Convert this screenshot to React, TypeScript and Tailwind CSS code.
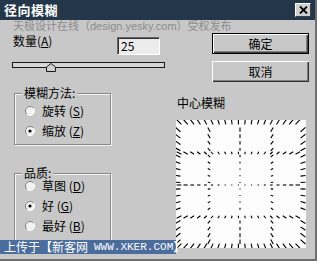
import React from "react";

const FONT = '"Noto Sans CJK SC", "Noto Sans", sans-serif';

function Radio({ checked }: { checked?: boolean }) {
  return (
    <svg width="10" height="10" viewBox="0 0 10 10" className="shrink-0">
      <circle cx="5" cy="5" r="4.5" fill="#f2f2f2" stroke="#ffffff" strokeWidth="1" />
      <path d="M1.8 8.2 A4.5 4.5 0 0 1 8.2 1.8" fill="none" stroke="#7a7a7a" strokeWidth="1" />
      {checked && <circle cx="5" cy="5" r="1.6" fill="#000" />}
    </svg>
  );
}

function RadioRow({ checked, label, k }: { checked?: boolean; label: string; k: string }) {
  return (
    <div className="flex h-[20px] items-center gap-[7px]">
      <Radio checked={checked} />
      <span className="text-[12px] leading-[14px] text-black">
        {label} (<span className="underline">{k}</span>)
      </span>
    </div>
  );
}

function Preview() {
  const W = 130;
  const H = 128;
  const cx = 64;
  const cy = 65;
  const xs = [2, 33, 64, 96, 127];
  const ys = [2, 33, 65, 97, 126];
  const dashes: { x1: number; y1: number; x2: number; y2: number }[] = [];
  const add = (px: number, py: number) => {
    const dx = px - cx;
    const dy = py - cy;
    const r = Math.sqrt(dx * dx + dy * dy);
    const L = Math.max(1, Math.min(7, 0.078 * r));
    const ux = r === 0 ? 1 : dx / r;
    const uy = r === 0 ? 0 : dy / r;
    dashes.push({
      x1: px - (ux * L) / 2,
      y1: py - (uy * L) / 2,
      x2: px + (ux * L) / 2,
      y2: py + (uy * L) / 2,
    });
  };
  for (const y of ys) {
    for (let x = 3; x <= 127; x += 6.6) add(x, y);
  }
  for (const x of xs) {
    for (let y = 3; y <= 126; y += 6.6) {
      if (ys.some((yy) => Math.abs(yy - y) < 2.5)) continue;
      add(x, y);
    }
  }
  return (
    <svg width={W} height={H} viewBox={`0 0 ${W} ${H}`} className="block">
      <rect x="0" y="0" width={W} height={H} fill="#fcfcfc" />
      {dashes.map((d, i) => (
        <line key={i} x1={d.x1} y1={d.y1} x2={d.x2} y2={d.y2} stroke="#000" strokeWidth="1.1" strokeLinecap="butt" />
      ))}
    </svg>
  );
}

function Group({ title, children, className }: { title: string; children: React.ReactNode; className: string }) {
  return (
    <div
      className={`relative ml-[2px] w-[97px] border border-[#8a8a8a] shadow-[inset_1px_1px_0_#f4f4f4,1px_1px_0_#f4f4f4] ${className}`}
    >
      <span className="absolute left-[7px] top-[-8px] bg-[#c8c8c8] px-[2px] text-[12px] leading-[14px] text-black">
        {title}
      </span>
      {children}
    </div>
  );
}

export default function App() {
  return (
    <div
      className="relative flex h-[261px] w-[317px] flex-col overflow-hidden border-b-[2px] border-r-[2px] border-[#6e6e6e] bg-[#c8c8c8]"
      style={{ fontFamily: FONT }}
    >
      {/* title bar */}
      <div className="flex h-[20px] shrink-0 items-center justify-between bg-[#243649] pl-[4px] pr-[4px]">
        <span className="text-[13px] font-bold leading-[16px] tracking-[0.5px] text-white">径向模糊</span>
        <div className="flex h-[14px] w-[16px] items-center justify-center border border-b-[#404040] border-l-[#ffffff] border-r-[#404040] border-t-[#ffffff] bg-[#d0d0d0]">
          <svg width="9" height="8" viewBox="0 0 9 8">
            <path d="M1 0.5 L8 7.5 M8 0.5 L1 7.5" stroke="#000" strokeWidth="1.8" />
          </svg>
        </div>
      </div>

      {/* body */}
      <div className="flex flex-1 pl-[12px]">
        {/* left column */}
        <div className="flex w-[153px] flex-col">
          <div className="mt-[13px] flex h-[22px]">
            <span className="mt-[1px] w-[105px] pl-[1px] text-[12px] leading-[14px] text-black">
              数量(<span className="underline">A</span>)
            </span>
            <div className="mt-[4px] flex h-[18px] w-[43px] items-center border border-b-[#ffffff] border-l-[#6a6a6a] border-r-[#ffffff] border-t-[#6a6a6a] bg-[#ececec] pl-[3px] shadow-[inset_1px_1px_0_#303030]">
              <span className="text-[12px] leading-[14px] text-black">25</span>
            </div>
          </div>
          <div className="relative mt-[7px] h-[6px] w-[153px] border border-[#1a1a1a] bg-[#d6d6d6]">
            <svg width="10" height="9" viewBox="0 0 10 9" className="absolute left-[33px] top-[0px]">
              <path d="M0.5 8.5 L0.5 4 L5 0.5 L9.5 4 L9.5 8.5 Z" fill="#cfcfcf" stroke="#1a1a1a" strokeWidth="1" />
            </svg>
          </div>

          <Group title="模糊方法:" className="mt-[25px] h-[52px] pl-[10px] pt-[7px]">
            <RadioRow label="旋转" k="S" />
            <RadioRow label="缩放" k="Z" checked />
          </Group>

          <Group title="品质:" className="mt-[28px] h-[78px] pl-[10px] pt-[2px]">
            <RadioRow label="草图" k="D" />
            <RadioRow label="好" k="G" checked />
            <RadioRow label="最好" k="B" />
          </Group>
        </div>

        {/* right column */}
        <div className="ml-[11px] flex w-[130px] flex-col">
          <div className="ml-[36px] mt-[13px] flex h-[21px] w-[97px] items-center justify-center border border-black bg-[#c8c8c8] shadow-[inset_1px_1px_0_#ffffff,inset_-1px_-1px_0_#404040,inset_-2px_-2px_0_#808080]">
            <span className="text-[12px] leading-[14px] text-black">确定</span>
          </div>
          <div className="ml-[36px] mt-[7px] flex h-[21px] w-[97px] items-center justify-center bg-[#c8c8c8] shadow-[inset_1px_1px_0_#ffffff,inset_-1px_-1px_0_#303030,inset_-2px_-2px_0_#808080]">
            <span className="text-[12px] leading-[14px] text-black">取消</span>
          </div>
          <span className="ml-[1px] mt-[14px] text-[12px] leading-[14px] text-black">中心模糊</span>
          <div className="mt-[10px]">
            <Preview />
          </div>
        </div>
      </div>

      {/* watermark overlays */}
      <span
        className="absolute left-[13px] top-[20px] whitespace-nowrap text-[11px] leading-[12px] text-[#8c8c8c]"
        style={{ fontFamily: '"Liberation Sans", "Noto Sans CJK SC", sans-serif' }}
      >
        天极设计在线（design.yesky.com）受权发布
      </span>
      <div className="absolute left-0 top-[240px] flex h-[14px] w-[176px] items-center bg-[#4b6d9d] pl-[4px] text-white">
        <span className="whitespace-nowrap text-[12px] leading-[14px]">上传于【新客网</span>
        <span
          className="ml-[6px] whitespace-nowrap text-[11px] leading-[14px]"
          style={{ fontFamily: '"Liberation Mono", monospace' }}
        >
          WWW.XKER.COM
        </span>
        <span className="whitespace-nowrap text-[12px] leading-[14px]">】</span>
      </div>
    </div>
  );
}
